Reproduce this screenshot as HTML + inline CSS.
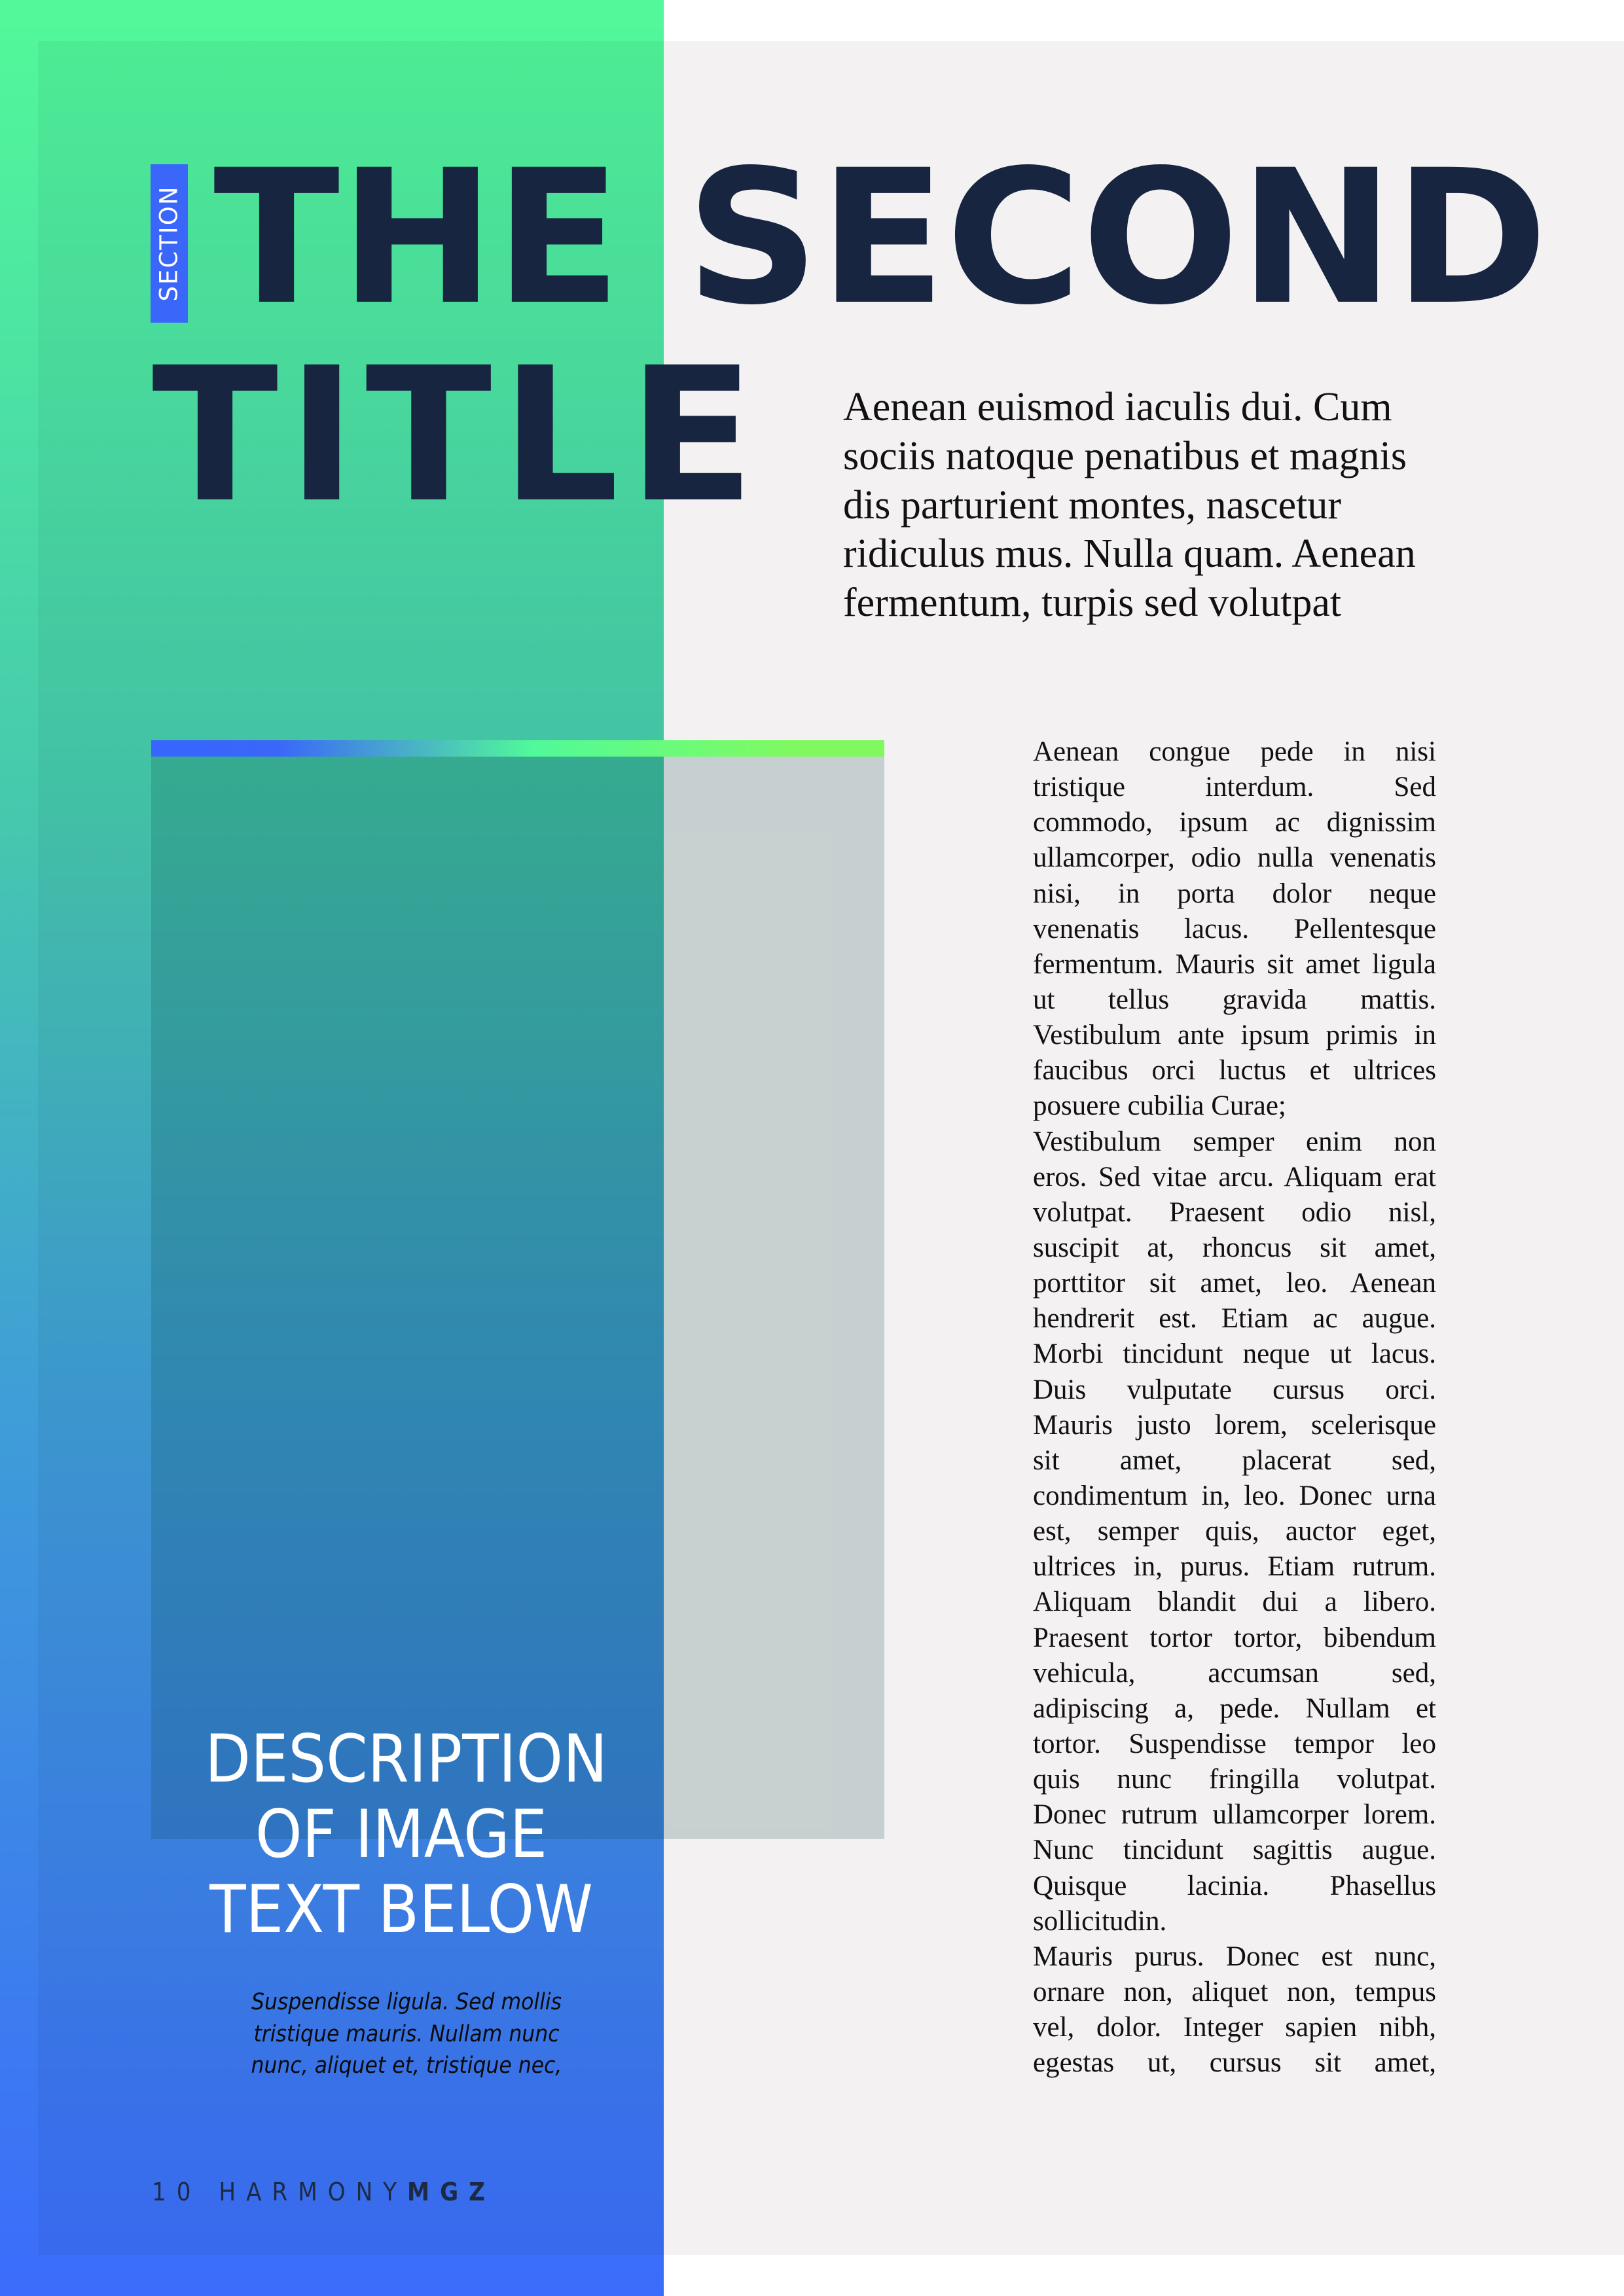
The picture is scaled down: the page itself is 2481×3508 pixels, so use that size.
<!DOCTYPE html>
<html><head><meta charset="utf-8">
<style>
html,body{margin:0;padding:0}
body{width:2481px;height:3508px;position:relative;overflow:hidden;background:#fff}
.abs{position:absolute}
#gray{left:58px;top:63px;width:2423px;height:3382px;background:#f3f1f2}
#green{left:0;top:0;width:1014px;height:3508px;background:linear-gradient(180deg,#52f99a 0%,#46c9ad 35%,#3f9fd6 60%,#3b6cfb 100%)}
#inner{left:58px;top:63px;width:956px;height:3382px;background:rgba(0,0,0,0.045)}
#img{left:231px;top:1156px;width:1120px;height:1654px;background:rgba(0,67,57,0.184)}
#bar{left:231px;top:1131px;width:1120px;height:25px;background:linear-gradient(90deg,#3666fd 0%,#3a66fa 17%,#4bbbc0 38%,#50f99a 52%,#6cfb78 72%,#80f95f 88%,#80f95f 100%)}
.title{font-family:"DejaVu Sans","Liberation Sans",sans-serif;font-weight:bold;color:#172540;font-size:283px;line-height:1;white-space:nowrap}
#sec{left:230px;top:251px;width:57px;height:242px;background:#3a66fa}
#sect{left:258px;top:372px;transform:translate(-50%,-50%) rotate(-90deg);color:#fff;font-family:"DejaVu Sans",sans-serif;font-size:37px;letter-spacing:2px;white-space:nowrap;line-height:1}
#lead{left:1288px;top:585px;font-family:"Liberation Serif",serif;font-size:62px;line-height:74.8px;color:#111;white-space:nowrap}
#body{left:1578px;top:1122px;width:616px;font-family:"Liberation Serif",serif;font-size:43px;line-height:54.15px;color:#111}
#body div{white-space:nowrap;text-align:justify;text-align-last:justify;height:54.15px}
#body div.l{text-align-last:left}
#cap{left:313px;width:600px;top:2630px;text-align:center;color:#fff;font-family:"DejaVu Sans Condensed","DejaVu Sans",sans-serif;font-stretch:condensed;font-size:101px;line-height:115px;white-space:nowrap}
#cap2{left:321px;width:600px;top:3035px;text-align:center;color:#0a0a0a;font-family:"DejaVu Sans Condensed","DejaVu Sans",sans-serif;font-stretch:condensed;font-style:italic;font-size:35px;line-height:48.5px;white-space:nowrap}
#foot{left:232px;top:3330px;color:#1d2a44;font-family:"DejaVu Sans Condensed","DejaVu Sans",sans-serif;font-stretch:condensed;font-size:38px;letter-spacing:16px;white-space:nowrap;line-height:1}
</style></head><body>
<div class="abs" id="gray"></div>
<div class="abs" id="green"></div>
<div class="abs" id="inner"></div>
<div class="abs" id="img"></div>
<div class="abs" id="bar"></div>
<div class="abs" id="sec"></div>
<div class="abs" id="sect">SECTION</div>
<div class="abs title" style="left:326px;top:222px">THE SECOND</div>
<div class="abs title" style="left:232px;top:524px;letter-spacing:14px">TITLE</div>
<div class="abs" id="lead">Aenean euismod iaculis dui. Cum<br>sociis natoque penatibus et magnis<br>dis parturient montes, nascetur<br>ridiculus mus. Nulla quam. Aenean<br>fermentum, turpis sed volutpat</div>
<div class="abs" id="body">
<div>Aenean congue pede in nisi</div>
<div>tristique interdum. Sed</div>
<div>commodo, ipsum ac dignissim</div>
<div>ullamcorper, odio nulla venenatis</div>
<div>nisi, in porta dolor neque</div>
<div>venenatis lacus. Pellentesque</div>
<div>fermentum. Mauris sit amet ligula</div>
<div>ut tellus gravida mattis.</div>
<div>Vestibulum ante ipsum primis in</div>
<div>faucibus orci luctus et ultrices</div>
<div class="l">posuere cubilia Curae;</div>
<div>Vestibulum semper enim non</div>
<div>eros. Sed vitae arcu. Aliquam erat</div>
<div>volutpat. Praesent odio nisl,</div>
<div>suscipit at, rhoncus sit amet,</div>
<div>porttitor sit amet, leo. Aenean</div>
<div>hendrerit est. Etiam ac augue.</div>
<div>Morbi tincidunt neque ut lacus.</div>
<div>Duis vulputate cursus orci.</div>
<div>Mauris justo lorem, scelerisque</div>
<div>sit amet, placerat sed,</div>
<div>condimentum in, leo. Donec urna</div>
<div>est, semper quis, auctor eget,</div>
<div>ultrices in, purus. Etiam rutrum.</div>
<div>Aliquam blandit dui a libero.</div>
<div>Praesent tortor tortor, bibendum</div>
<div>vehicula, accumsan sed,</div>
<div>adipiscing a, pede. Nullam et</div>
<div>tortor. Suspendisse tempor leo</div>
<div>quis nunc fringilla volutpat.</div>
<div>Donec rutrum ullamcorper lorem.</div>
<div>Nunc tincidunt sagittis augue.</div>
<div>Quisque lacinia. Phasellus</div>
<div class="l">sollicitudin.</div>
<div>Mauris purus. Donec est nunc,</div>
<div>ornare non, aliquet non, tempus</div>
<div>vel, dolor. Integer sapien nibh,</div>
<div>egestas ut, cursus sit amet,</div>
</div>
<div class="abs" id="cap">DESCRIPTION<br>OF IMAGE<br>TEXT BELOW</div>
<div class="abs" id="cap2">Suspendisse ligula. Sed mollis<br>tristique mauris. Nullam nunc<br>nunc, aliquet et, tristique nec,</div>
<div class="abs" id="foot">10 HARMONY<b>MGZ</b></div>
</body></html>
